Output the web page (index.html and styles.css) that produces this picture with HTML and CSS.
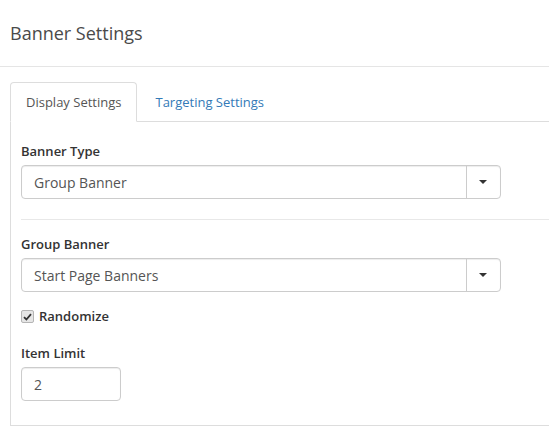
FILE: index.html
```html
<!DOCTYPE html>
<html>
<head>
<meta charset="utf-8">
<link rel="stylesheet" href="styles.css">
</head>
<body>
<div class="page">
  <header class="header"><h1 class="title">Banner Settings</h1></header>
  <div class="tabs-wrap">
    <ul class="tabs">
      <li class="tab active"><span>Display Settings</span></li>
      <li class="tab"><span class="link">Targeting Settings</span></li>
    </ul>
    <div class="panel">
      <div class="group">
        <div class="label">Banner Type</div>
        <div class="select">
          <div class="select-value">Group Banner</div>
          <div class="select-btn"><span class="caret"></span></div>
        </div>
      </div>
      <hr class="divider">
      <div class="group">
        <div class="label">Group Banner</div>
        <div class="select">
          <div class="select-value">Start Page Banners</div>
          <div class="select-btn"><span class="caret"></span></div>
        </div>
      </div>
      <div class="check-row">
        <span class="checkbox"><svg width="9" height="8" viewBox="0 0 9 8"><path d="M1 4.2 L3.4 6.5 L8 1.2" fill="none" stroke="#333" stroke-width="1.8"/></svg></span>
        <span class="check-label">Randomize</span>
      </div>
      <div class="group last">
        <div class="label">Item Limit</div>
        <div class="input">2</div>
      </div>
    </div>
  </div>
</div>
</body>
</html>
```
FILE: styles.css
```css
html, body {
  margin: 0;
  padding: 0;
  background: #fff;
  overflow: hidden;
}
.page {
  font-family: "Open Sans", "Liberation Sans", sans-serif;
  font-size: 13px;
  color: #333;
  width: 549px;
}
.header {
  height: 66px;
  border-bottom: 1px solid #e5e5e5;
  padding: 0 10px;
  display: flex;
  align-items: center;
}
.title {
  margin: 0;
  font-size: 18px;
  font-weight: 400;
  color: #4a4a4a;
  line-height: 24px;
  padding-bottom: 1px;
}
.tabs-wrap {
  margin: 15px 0 0 10px;
}
.tabs {
  list-style: none;
  margin: 0;
  padding: 0;
  display: flex;
  border-bottom: 1px solid #ddd;
}
.tab {
  margin-right: 2px;
  margin-bottom: -1px;
  padding: 10px 15px 9px;
  line-height: 19px;
  border: 1px solid transparent;
  border-radius: 4px 4px 0 0;
  color: #555;
}
.tab.active {
  border-color: #ddd;
  border-bottom-color: #fff;
  background: #fff;
}
.link {
  color: #337ab7;
}
.panel {
  border-left: 1px solid #ddd;
  border-bottom: 1px solid #ddd;
  padding: 20px 0 24px 10px;
}
.group {
  display: flex;
  flex-direction: column;
  gap: 4px;
}
.label, .check-label {
  font-weight: 600;
  line-height: 19px;
  color: #333;
}
.select {
  width: 480px;
  height: 34px;
  box-sizing: border-box;
  display: flex;
  border: 1px solid #ccc;
  border-radius: 4px;
  box-shadow: inset 0 1px 1px rgba(0,0,0,0.075);
}
.select-value {
  flex: 1;
  padding: 0 12px;
  display: flex;
  align-items: center;
  color: #555;
  font-size: 14px;
}
.select-btn {
  width: 33px;
  border-left: 1px solid #ccc;
  display: flex;
  align-items: center;
  justify-content: center;
}
.caret {
  width: 0;
  height: 0;
  border-left: 4px solid transparent;
  border-right: 4px solid transparent;
  border-top: 4px solid #333;
  margin-left: -1px;
}
.divider {
  margin: 20px 0 15px;
  border: 0;
  border-top: 1px solid #e8e8e8;
}
.check-row {
  margin: 15px 0 18px;
  display: flex;
  align-items: center;
  gap: 5px;
}
.checkbox {
  width: 11px;
  height: 11px;
  border: 1px solid #b5b5b5;
  border-radius: 2px;
  background: #e6e6e6;
  display: flex;
  align-items: center;
  justify-content: center;
}
.input {
  width: 100px;
  height: 34px;
  box-sizing: border-box;
  border: 1px solid #ccc;
  border-radius: 4px;
  padding: 0 12px;
  display: flex;
  align-items: center;
  color: #555;
  font-size: 14px;
  box-shadow: inset 0 1px 1px rgba(0,0,0,0.075);
}
```
